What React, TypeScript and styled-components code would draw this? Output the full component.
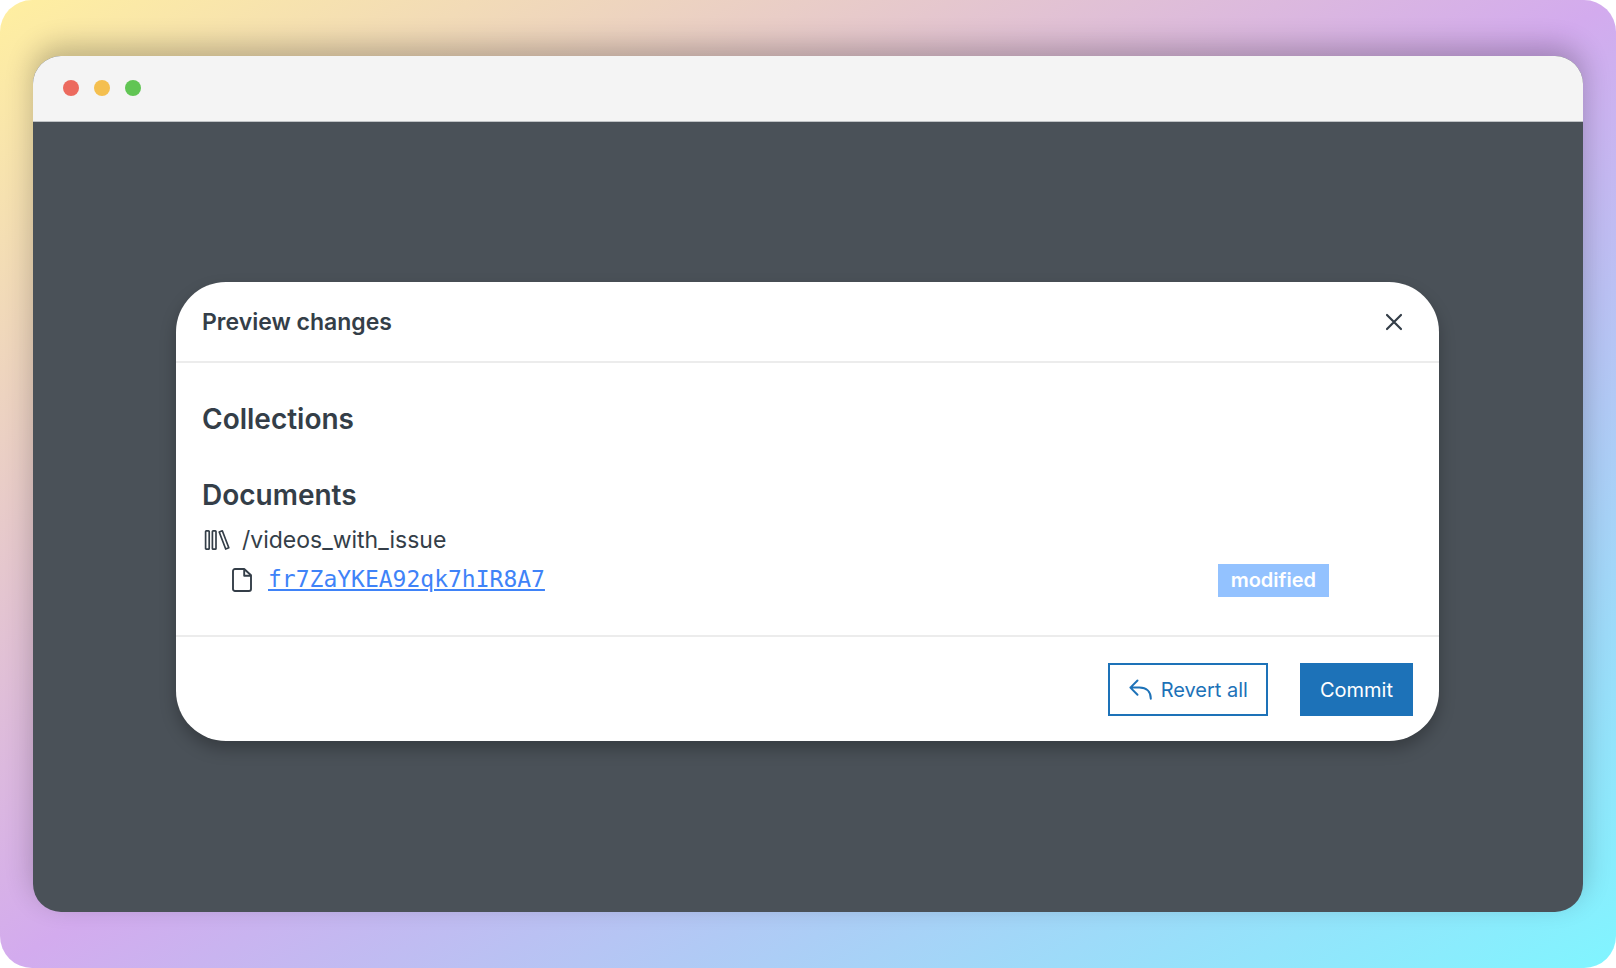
import React from "react";
import styled, { createGlobalStyle } from "styled-components";

const GlobalStyle = createGlobalStyle`
  *, *::before, *::after { box-sizing: border-box; }
  html, body, #root { height: 100%; }
  body { margin: 0; background: #fff; font-family: Inter, "Liberation Sans", sans-serif; }
`;

const Backdrop = styled.div`
  display: flex;
  min-height: 100%;
  padding: 56px 33px;
  border-radius: 32px;
  background: linear-gradient(to bottom right, #ffefa0, #d3abee 50%, #80f5ff);
`;

const BrowserWindow = styled.section`
  display: flex;
  flex: 1;
  flex-direction: column;
  overflow: hidden;
  border-radius: 28px;
  background: #4a5158;
  box-shadow: 0 -10px 28px rgba(0, 0, 0, 0.24);
`;

const TitleBar = styled.header`
  display: flex;
  align-items: center;
  gap: 15px;
  height: 66px;
  padding: 0 30px 1px;
  border-bottom: 1px solid #bfc2c5;
  background: #f4f4f4;
`;

const WindowDot = styled.span<{ $color: string }>`
  width: 16px;
  height: 16px;
  border-radius: 50%;
  background: ${({ $color }) => $color};
`;

const Stage = styled.main`
  padding: 160px 144px 0 143px;
`;

const Dialog = styled.div`
  overflow: hidden;
  border-radius: 50px;
  background: #fff;
  color: #343e48;
  box-shadow: 0 8px 16px rgba(0, 0, 0, 0.26);
`;

const DialogHeader = styled.header`
  display: flex;
  align-items: center;
  justify-content: space-between;
  height: 81px;
  padding: 0 32px 0 26px;
  border-bottom: 2px solid #ececec;
`;

const DialogTitle = styled.h1`
  margin: 0;
  font-size: 23px;
  font-weight: 600;
  line-height: 32px;
`;

const CloseButton = styled.button`
  display: grid;
  place-items: center;
  width: 26px;
  height: 26px;
  padding: 0;
  border: 0;
  background: none;
  color: inherit;
`;

const DialogBody = styled.div`
  display: flex;
  flex-direction: column;
  padding: 36px 26px 35px;
`;

const SectionTitle = styled.h2`
  margin: 0 0 36px;
  font-size: 28px;
  font-weight: 600;
  line-height: 40px;

  & + & { margin-bottom: 5px; }
`;

const CollectionRow = styled.div`
  display: flex;
  align-items: center;
  gap: 12px;
  height: 40px;
  padding-left: 2px;
  font-size: 23px;
  line-height: 32px;
`;

const DocumentRow = styled.div`
  display: flex;
  align-items: center;
  gap: 16px;
  height: 40px;
  padding: 0 84px 0 30px;
`;

const DocumentLink = styled.a`
  margin-right: auto;
  padding-bottom: 2px;
  color: #3f83f8;
  font-family: "DejaVu Sans Mono", monospace;
  font-size: 23px;
  line-height: 32px;
  text-decoration: underline;
  text-decoration-thickness: 2px;
  text-underline-offset: 2px;
`;

const Badge = styled.span`
  padding: 0 13px;
  background: #93c2ff;
  color: #fff;
  font-size: 20px;
  font-weight: 600;
  line-height: 33px;
`;

const DialogFooter = styled.footer`
  display: flex;
  justify-content: flex-end;
  gap: 32px;
  padding: 26px 26px 25px;
  border-top: 2px solid #ececec;
`;

const Button = styled.button<{ $primary?: boolean }>`
  display: flex;
  align-items: center;
  gap: 9px;
  height: 53px;
  padding: 0 18px;
  border: 2px solid #1d72b8;
  border-radius: 0;
  background: ${({ $primary }) => ($primary ? "#1d72b8" : "#fff")};
  color: ${({ $primary }) => ($primary ? "#fff" : "#1d72b8")};
  font-family: inherit;
  font-size: 20px;
  font-weight: 400;
  line-height: 24px;
`;

const CloseIcon = () => (
  <svg width="18" height="18" viewBox="0 0 18 18" fill="none" stroke="currentColor" strokeWidth="2.2" strokeLinecap="round" aria-hidden="true">
    <path d="M2 2l14 14M16 2L2 16" />
  </svg>
);

const LibraryIcon = () => (
  <svg width="26" height="22" viewBox="0 0 26 22" fill="none" stroke="currentColor" strokeWidth="1.700" strokeLinejoin="round" aria-hidden="true">
    <rect x="1.600" y="1.800" width="3.600" height="18.400" rx="0.800" />
    <rect x="8.400" y="1.800" width="3.600" height="18.400" rx="0.800" />
    <path d="M15.200 3l3.100-1.200 6.500 17-3.100 1.200z" />
  </svg>
);

const FileIcon = () => (
  <svg width="20" height="24" viewBox="0 0 20 24" fill="none" stroke="currentColor" strokeWidth="1.900" strokeLinejoin="round" aria-hidden="true">
    <path d="M3 1h9.200L19 7.300V21a2 2 0 0 1-2 2H3a2 2 0 0 1-2-2V3a2 2 0 0 1 2-2z" />
    <path d="M12.200 1v6.800H19" />
  </svg>
);

const RevertIcon = () => (
  <svg width="24" height="22" viewBox="0 0 24 22" fill="none" stroke="currentColor" strokeWidth="2" strokeLinecap="round" strokeLinejoin="round" aria-hidden="true">
    <path d="M9.500 1.500L2.400 8.600l7.100 7.100M2.400 8.600h9c7 0 11.400 4.200 11.400 11.200" />
  </svg>
);

export default function App() {
  return (
    <>
      <GlobalStyle />
      <Backdrop>
        <BrowserWindow>
          <TitleBar>
            <WindowDot $color="#ec6a5e" />
            <WindowDot $color="#f4bf4f" />
            <WindowDot $color="#61c554" />
          </TitleBar>
          <Stage>
            <Dialog role="dialog" aria-labelledby="dialog-title">
              <DialogHeader>
                <DialogTitle id="dialog-title">Preview changes</DialogTitle>
                <CloseButton type="button" aria-label="Close">
                  <CloseIcon />
                </CloseButton>
              </DialogHeader>
              <DialogBody>
                <SectionTitle>Collections</SectionTitle>
                <SectionTitle>Documents</SectionTitle>
                <CollectionRow>
                  <LibraryIcon />
                  <span>/videos_with_issue</span>
                </CollectionRow>
                <DocumentRow>
                  <FileIcon />
                  <DocumentLink href="#fr7ZaYKEA92qk7hIR8A7">fr7ZaYKEA92qk7hIR8A7</DocumentLink>
                  <Badge>modified</Badge>
                </DocumentRow>
              </DialogBody>
              <DialogFooter>
                <Button type="button">
                  <RevertIcon />
                  Revert all
                </Button>
                <Button type="button" $primary>
                  Commit
                </Button>
              </DialogFooter>
            </Dialog>
          </Stage>
        </BrowserWindow>
      </Backdrop>
    </>
  );
}
